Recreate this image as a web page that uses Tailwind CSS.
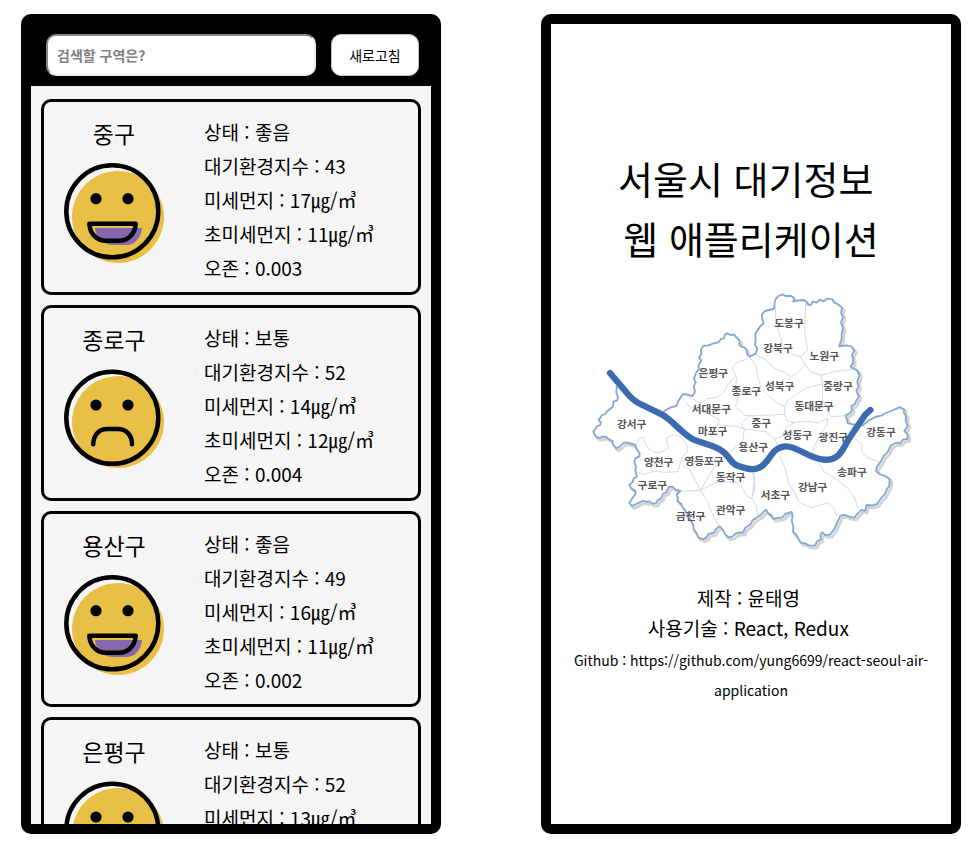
<!DOCTYPE html>
<html lang="ko">
<head>
<meta charset="utf-8">
<meta name="viewport" content="width=device-width, initial-scale=1">
<title>서울시 대기정보</title>
<script src="https://cdn.jsdelivr.net/npm/@tailwindcss/browser@4"></script>
</head>
<body class="bg-white text-black font-['Noto_Sans_CJK_KR',sans-serif]">
<svg class="hidden" aria-hidden="true">
  <symbol id="happy" viewBox="0 0 100 100">
    <circle cx="54" cy="54" r="46" fill="#e9c046"/>
    <path d="M31 65H78C77 75 71 82 62 82H49C39 82 32 75 31 65Z" fill="#8467ae"/>
    <circle cx="48.3" cy="48.3" r="46" fill="none" stroke="#000" stroke-width="4.5"/>
    <circle cx="32" cy="35.7" r="5.6"/><circle cx="64" cy="35.7" r="5.6"/>
    <path d="M25.3 60.8H71.7C71 71 64 77.7 55 77.7H42C33 77.7 26 71 25.3 60.8Z" fill="none" stroke="#000" stroke-width="4.5" stroke-linejoin="round"/>
  </symbol>
  <symbol id="sad" viewBox="0 0 100 100">
    <circle cx="54" cy="53" r="46" fill="#e9c046"/>
    <circle cx="48.3" cy="48.8" r="46" fill="none" stroke="#000" stroke-width="4.5"/>
    <circle cx="32" cy="36" r="5.6"/><circle cx="64" cy="36" r="5.6"/>
    <path d="M29.3 75.3C29.3 66 35 60 43 60H54C62 60 68 66 68 75.3" fill="none" stroke="#000" stroke-width="4.5" stroke-linecap="round"/>
  </symbol>
</svg>

<div class="flex h-screen gap-[100px] pt-[14px] pr-[17px] pb-[19px] pl-[21px]">
  <main class="flex w-full max-w-[420px] flex-col overflow-hidden rounded-[10px] border-10 border-black bg-black">
    <form class="flex gap-[15px] pt-[10px] pr-[12px] pb-[10px] pl-[15px]">
      <input type="text" aria-label="구역 검색" placeholder="검색할 구역은?" class="h-[42px] min-w-0 flex-1 rounded-[10px] border-2 border-t-[#888] border-l-[#888] border-r-[#eee] border-b-[#eee] bg-white px-[9px] text-[14px] font-bold placeholder:text-[#808080]">
      <button type="button" class="h-[42px] w-[88px] rounded-[10px] border border-[#c0c0c0] bg-white text-[14px]">새로고침</button>
    </form>
    <ul class="flex min-h-0 flex-1 flex-col gap-[10px] overflow-x-hidden overflow-y-auto [scrollbar-width:none] bg-[#f5f5f5] px-[10px] pt-[13px]">
      <li class="flex shrink-0 rounded-[10px] border-3 border-black pt-[13px] pb-[7px]">
        <div class="flex w-[140px] flex-col items-center gap-[12px]">
          <h2 class="text-[23px] leading-[36px]">중구</h2>
          <svg class="size-[100px]" role="img" aria-label="좋음"><use href="#happy"/></svg>
        </div>
        <div class="pl-[20px] text-[19px] leading-[34px]">
          <p>상태 : 좋음</p><p>대기환경지수 : 43</p><p>미세먼지 : 17㎍/㎥</p><p>초미세먼지 : 11㎍/㎥</p><p>오존 : 0.003</p>
        </div>
      </li>
      <li class="flex shrink-0 rounded-[10px] border-3 border-black pt-[13px] pb-[7px]">
        <div class="flex w-[140px] flex-col items-center gap-[12px]">
          <h2 class="text-[23px] leading-[36px]">종로구</h2>
          <svg class="size-[100px]" role="img" aria-label="보통"><use href="#sad"/></svg>
        </div>
        <div class="pl-[20px] text-[19px] leading-[34px]">
          <p>상태 : 보통</p><p>대기환경지수 : 52</p><p>미세먼지 : 14㎍/㎥</p><p>초미세먼지 : 12㎍/㎥</p><p>오존 : 0.004</p>
        </div>
      </li>
      <li class="flex shrink-0 rounded-[10px] border-3 border-black pt-[13px] pb-[7px]">
        <div class="flex w-[140px] flex-col items-center gap-[12px]">
          <h2 class="text-[23px] leading-[36px]">용산구</h2>
          <svg class="size-[100px]" role="img" aria-label="좋음"><use href="#happy"/></svg>
        </div>
        <div class="pl-[20px] text-[19px] leading-[34px]">
          <p>상태 : 좋음</p><p>대기환경지수 : 49</p><p>미세먼지 : 16㎍/㎥</p><p>초미세먼지 : 11㎍/㎥</p><p>오존 : 0.002</p>
        </div>
      </li>
      <li class="flex shrink-0 rounded-[10px] border-3 border-black pt-[13px] pb-[7px]">
        <div class="flex w-[140px] flex-col items-center gap-[12px]">
          <h2 class="text-[23px] leading-[36px]">은평구</h2>
          <svg class="size-[100px]" role="img" aria-label="보통"><use href="#sad"/></svg>
        </div>
        <div class="pl-[20px] text-[19px] leading-[34px]">
          <p>상태 : 보통</p><p>대기환경지수 : 52</p><p>미세먼지 : 13㎍/㎥</p>
        </div>
      </li>
    </ul>
  </main>

  <aside class="flex w-full max-w-[420px] flex-col items-center overflow-hidden rounded-[10px] border-10 border-black bg-black text-center">
    <div class="flex w-full flex-1 flex-col items-center justify-center bg-white px-[20px] pt-[4px]">
      <h1 class="text-[38px] leading-[60px]">서울시 대기정보&nbsp;<br>웹 애플리케이션</h1>
      <svg viewBox="0 0 1020 810" class="mt-[17px] w-full max-w-[340px]" role="img" aria-label="서울시 지도">
        <defs>
          <path id="city" stroke-linejoin="round" stroke-linecap="round" d="M107 306L106 322L111 338L108 347L98 349L96 364L90 370L78 379L73 387L62 391L57 400L52 404L60 412L58 420L47 424L44 431L37 440L41 449L48 457L57 459L64 455L76 456L85 464L95 468L96 478L106 490L117 484L129 472L141 474L153 477L163 480L167 493L176 504L175 514L163 520L160 532L165 545L163 558L168 575L158 580L155 591L145 600L151 611L163 617L164 626L154 640L145 654L153 663L170 655L187 647L197 651L206 649L214 656L225 655L229 646L241 640L245 627L256 622L263 606L274 605L284 614L298 618L287 629L291 640L289 648L301 657L304 666L313 676L320 692L329 705L337 720L338 733L347 745L352 757L366 763L377 757L382 747L399 743L406 731L416 724L425 733L431 746L442 757L454 755L465 745L478 742L486 743L493 728L507 719L515 706L531 695L540 690L549 679L556 674L562 686L572 691L577 702L590 699L605 697L612 687L632 681L635 692L632 708L637 724L636 741L646 750L652 760L659 773L673 775L682 781L702 782L708 769L720 763L718 752L723 742L733 750L747 749L760 732L767 715L779 691L792 690L805 695L820 698L829 687L840 675L853 677L857 660L875 661L888 657L899 641L912 627L917 613L925 603L926 583L914 574L895 567L885 558L888 545L900 529L909 512L921 500L928 483L943 473L959 474L967 463L980 462L979 448L970 438L980 423L974 406L975 392L968 383L970 373L961 370L957 366L947 371L931 378L914 384L902 391L883 396L862 407L845 422L835 418L818 419L800 414L797 400L793 392L806 385L813 376L811 363L821 358L827 345L834 335L826 319L832 305L829 290L835 271L829 256L812 248L809 244L816 235L816 221L813 209L820 197L812 185L796 181L775 184L782 161L782 146L786 129L780 112L786 97L780 82L783 68L776 62L766 55L758 52L755 43L740 41L728 49L717 44L706 53L695 49L691 59L682 60L676 50L669 45L653 46L637 50L639 39L631 33L614 33L605 28L592 33L583 44L581 56L578 72L564 75L552 78L543 88L544 104L548 114L536 126L529 137L523 146L524 165L522 180L529 191L524 206L506 215L499 209L497 196L490 187L480 184L475 180L476 168L466 157L459 149L449 150L439 145L432 149L429 160L420 162L412 172L395 176L382 181L367 183L360 193L361 207L354 217L361 226L353 240L353 253L345 264L339 281L344 293L338 304L342 320L335 333L319 329L307 327L300 335L292 348L286 363L269 367L250 378"/>
        </defs>
        <use href="#city" transform="translate(6 7)" fill="none" stroke="#d6d4d4" stroke-width="9"/>
        <use href="#city" fill="#fff" stroke="#85a9d4" stroke-width="5.5"/>
        <g fill="none" stroke="#c8d8eb" stroke-width="2.8" stroke-linejoin="round">
          <path d="M583 50L584 100L594 145L605 180L633 208L659 216L680 194L671 140L674 52"/>
          <path d="M525 210L555 225L580 250L610 262L630 275L648 264L673 240L659 216M673 240L690 262L720 271L760 260L815 253"/>
          <path d="M506 217L465 235L454 248L467 280L463 310L470 345L463 365L490 390L510 392M506 217L524 240L530 275L540 310L560 330L590 356L612 364L618 348L650 325L680 307L725 297L720 271M725 297L724 340L740 375L750 395L795 392"/>
          <path d="M463 275L440 300L430 320L408 338L380 340L360 355L318 333M358 357L330 370L314 352M340 370L390 390L415 405L410 420L470 425L490 432L480 415L505 393L610 388L612 364M610 388L618 407L640 412L615 428L602 455L580 461L555 440L490 432"/>
          <path d="M490 432L485 470L448 500M580 461L594 485M640 412L680 409L710 414L740 400M740 400L738 420L720 445L700 485L693 508"/>
          <path d="M167 478L173 463L187 456L197 485L220 502L240 502L263 488L255 460L274 450L300 455L318 480L320 498L302 518L291 560L250 562L220 558L190 568L168 560M302 541L325 552L345 590L358 616L398 550L415 535M358 616L410 590L465 592L480 600L495 630L510 642L520 620L521 560M298 618L358 616L380 650L388 675L414 722"/>
          <path d="M594 510L613 550L625 600L640 622L655 652L690 668L740 654L760 670L763 688L780 692M708 525L730 560L770 585L800 610L822 640L831 670M823 460L842 478L842 505L860 518L893 530M515 560L520 590L513 640L525 660L530 694"/>
        </g>
        <path d="M90 264L135 317Q155 343 175 354L245 388C280 408 310 450 340 463C375 479 410 480 435 505C455 524 452 536 475 543C510 555 530 558 552 538C574 516 580 488 615 484C650 481 680 518 730 524C775 528 788 496 804 466L855 390L871 375" transform="translate(-3 0)" fill="none" stroke="#3c6aae" stroke-width="19" stroke-linecap="round" stroke-linejoin="round"/>
        <g fill="#555" font-size="32" font-weight="700" text-anchor="middle" transform="translate(-4 0)">
          <text x="628" y="126">도봉구</text><text x="595" y="200">강북구</text><text x="734" y="224">노원구</text>
          <text x="401" y="276">은평구</text><text x="500" y="331">종로구</text><text x="600" y="314">성북구</text>
          <text x="775" y="316">중랑구</text><text x="703" y="374">동대문구</text><text x="395" y="385">서대문구</text>
          <text x="156" y="428">강서구</text><text x="399" y="450">마포구</text><text x="545" y="426">중구</text>
          <text x="653" y="461">성동구</text><text x="761" y="469">광진구</text><text x="904" y="453">강동구</text>
          <text x="521" y="499">용산구</text><text x="237" y="542">양천구</text><text x="373" y="540">영등포구</text>
          <text x="453" y="587">동작구</text><text x="817" y="573">송파구</text><text x="218" y="611">구로구</text>
          <text x="699" y="617">강남구</text><text x="587" y="641">서초구</text><text x="333" y="704">금천구</text><text x="453" y="688">관악구</text>
        </g>
      </svg>
      <div class="mt-[28px] text-[19px] leading-[30px]">
        <p>제작 : 윤태영&nbsp;</p>
        <p>사용기술 : React, Redux&nbsp;</p>
      </div>
      <p class="mt-[2px] text-[14px] leading-[30px]">Github : https://github.com/yung6699/react-seoul-air-application</p>
    </div>
  </aside>
</div>
</body>
</html>
